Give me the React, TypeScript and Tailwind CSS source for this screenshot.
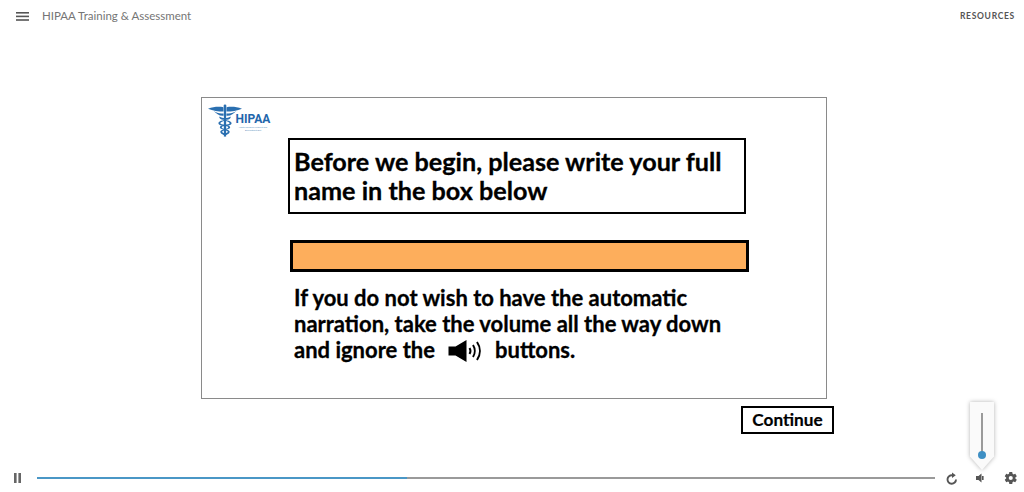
import React from "react";

function Caduceus() {
  return (
    <svg width="34" height="34" viewBox="0 0 36 35" fill="#2a6fb0">
      <path d="M0 4.5 C6 2.5 11 2 16.5 3 L16.5 7.5 C11 7.5 5 6.5 0 4.5Z" />
      <path d="M36 4.500 C30 2.500 25 2 19.500 3 L19.500 7.500 C25 7.500 31 6.500 36 4.500Z" />
      <path d="M6 7 C9 9 12 10 16.500 9.500 L16.500 12 C12 12.500 9 10 6 7Z" />
      <path d="M30 7 C27 9 24 10 19.500 9.500 L19.500 12 C24 12.500 27 10 30 7Z" />
      <circle cx="18" cy="1.500" r="1.500" />
      <rect x="16.800" y="2" width="2.400" height="32" />
      <path d="M12 12.500 C14 15.500 23 14.500 24 13 C25 17 13 17 13 20 C13 22 23 21 23.500 24 C23.500 27 15 26.500 15 29 C15 31 20 31 21 29.500 L21 31 C19 33.500 13 32 13 29 C13 26 21.500 26 21.500 24 C21 22.500 11 23.500 11 20 C11 16.500 20 17 21 15.500 C18 16.500 13 16 12 12.500Z" />
      <path d="M24 12.500 C22 15.500 13 14.500 12 13 C11 17 23 17 23 20 C23 22 13 21 12.500 24 C12.500 27 21 26.500 21 29 C21 31 16 31 15 29.500 L15 31 C17 33.500 23 32 23 29 C23 26 14.500 26 14.500 24 C15 22.500 25 23.500 25 20 C25 16.500 16 17 15 15.500 C18 16.500 23 16 24 12.500Z" />
    </svg>
  );
}

function Logo() {
  return (
    <div className="absolute left-[6px] top-[6px] flex items-start">
      <Caduceus />
      <div className="ml-[-7px] mt-[9px] flex w-[36px] flex-col items-center">
        <span className="text-[12px] leading-[12px] font-bold text-[#1f66ab] font-['Roboto',sans-serif]">HIPAA</span>
        <span className="mt-[1px] w-[36px] text-center text-[2px] leading-[3px] text-[#5c8fc0] font-['Roboto',sans-serif]">Health Insurance Portability and Accountability Act</span>
      </div>
    </div>
  );
}

function SpeakerBig() {
  return (
    <svg width="36" height="22" viewBox="0 0 35 22" className="ml-[13px] mr-[11px] inline-block align-[-4px]">
      <path d="M0 6.500H7L18 0V22L7 15.500H0Z" fill="#000" />
      <path d="M21 8C22.300 10 22.300 12 21 14" fill="none" stroke="#000" strokeWidth="2" />
      <path d="M24.500 5C26.800 8.500 26.800 13.500 24.500 17" fill="none" stroke="#000" strokeWidth="2" />
      <path d="M28.500 2C32.300 7.500 32.300 14.500 28.500 20" fill="none" stroke="#000" strokeWidth="2" />
    </svg>
  );
}

export default function App() {
  return (
    <div className="relative flex h-[492px] w-[1024px] flex-col overflow-hidden bg-white font-['Lato',sans-serif]">
      <header className="flex h-[32px] shrink-0 items-center justify-between pl-[16px] pr-[9px]">
        <div className="flex items-center">
          <svg width="13" height="9" viewBox="0 0 13 9" fill="#555">
            <rect y="0" width="13" height="1.600" />
            <rect y="3.600" width="13" height="1.600" />
            <rect y="7.200" width="13" height="1.600" />
          </svg>
          <span className="ml-[13px] text-[11.5px] text-[#757575]">HIPAA Training &amp; Assessment</span>
        </div>
        <span className="text-[8.5px] font-bold tracking-[0.7px] text-[#555]">RESOURCES</span>
      </header>

      <main className="flex-1 pl-[201px] pt-[65px]">
        <section className="relative h-[302px] w-[626px] border border-[#8a8a8a] bg-white pl-[86px] pt-[40px]">
          <Logo />
          <div className="h-[76px] w-[458px] border-2 border-black pl-[4px] pt-[7px] text-[25.2px] leading-[29px] font-bold text-black [-webkit-text-stroke:0.3px_black]">
            Before we begin, please write your full name in the box below
          </div>
          <div className="ml-[2px] mt-[26px] h-[32px] w-[459px] border-[3px] border-black bg-[#fdae5c]" />
          <p className="ml-[6px] mt-[13px] w-[450px] text-[22px] leading-[26px] font-bold text-black [-webkit-text-stroke:0.3px_black]">
            If you do not wish to have the automatic narration, take the volume all the way down and ignore the
            <SpeakerBig />
            buttons.
          </p>
        </section>
        <div className="mt-[7px] flex w-[633px] justify-end">
          <button className="h-[28px] w-[93px] border-2 border-black bg-white text-[17.2px] leading-[22px] font-bold text-black [-webkit-text-stroke:0.2px_black]">
            Continue
          </button>
        </div>
      </main>

      <footer className="flex h-[28px] shrink-0 items-center pb-[1px] pl-[14px]">
        <svg width="7" height="10" viewBox="0 0 7 10" fill="#666">
          <rect width="2.600" height="10" />
          <rect x="4.400" width="2.600" height="10" />
        </svg>
        <div className="ml-[16px] flex h-[2px] w-[898px]">
          <div className="w-[370px] bg-[#4a97c6]" />
          <div className="flex-1 bg-[#9a9a9a]" />
        </div>
        <svg width="12" height="13" viewBox="0 0 24 26" fill="none" stroke="#555" strokeWidth="3.800" className="ml-[11px] mt-[1px]">
          <path d="M20 15A8.500 8.500 0 1 1 12.500 6.500" />
          <path d="M12 1L19.500 6.500L12 12Z" fill="#555" stroke="none" />
        </svg>
        <svg width="8" height="10" viewBox="0 0 8 10" fill="#555" className="ml-[18px]">
          <path d="M0 3H2.500L5.500 0.500V9.500L2.500 7H0Z" />
          <rect x="6" y="3" width="1.600" height="4" />
        </svg>
        <svg width="14" height="14" viewBox="0 0 24 24" fill="#555" className="ml-[20px] mt-[1px]">
          <path fillRule="evenodd" d="M19.400 13c.1-.3.1-.7.1-1s0-.7-.1-1l2.200-1.700c.2-.2.2-.4.1-.6l-2.100-3.600c-.1-.2-.4-.3-.6-.2l-2.600 1c-.5-.4-1.100-.8-1.800-1L14.200 2.200C14.200 2 14 1.800 13.700 1.800H9.500c-.3 0-.5.2-.5.4L8.600 4.900c-.6.3-1.200.6-1.800 1l-2.600-1c-.2-.1-.5 0-.6.2L1.500 8.700c-.1.2-.1.5.1.6L3.800 11c0 .3-.1.700-.1 1s0 .7.1 1l-2.200 1.700c-.2.2-.2.4-.1.6l2.100 3.600c.1.2.4.3.6.2l2.600-1c.5.4 1.100.8 1.800 1l.4 2.700c0 .2.2.4.5.4h4.200c.3 0 .5-.2.5-.4l.4-2.700c.6-.3 1.200-.6 1.800-1l2.600 1c.2.1.5 0 .6-.2l2.100-3.600c.1-.2.1-.5-.1-.6ZM11.600 15.500a3.500 3.500 0 1 1 0-7 3.500 3.500 0 0 1 0 7Z" />
        </svg>
      </footer>

      <div className="absolute left-[970px] top-[402px] drop-shadow-[0_0_2px_rgba(0,0,0,0.3)]">
        <div className="flex h-[68px] w-[24px] flex-col items-center bg-[#fafafa] pt-[11px] [clip-path:polygon(0_0,100%_0,100%_80%,50%_100%,0_80%)]">
          <div className="relative h-[42px] w-[2px] bg-[#9a9a9a]">
            <div className="absolute bottom-[-4px] left-[-3px] h-[8px] w-[8px] rounded-full bg-[#3e8fc4]" />
          </div>
        </div>
      </div>
    </div>
  );
}
